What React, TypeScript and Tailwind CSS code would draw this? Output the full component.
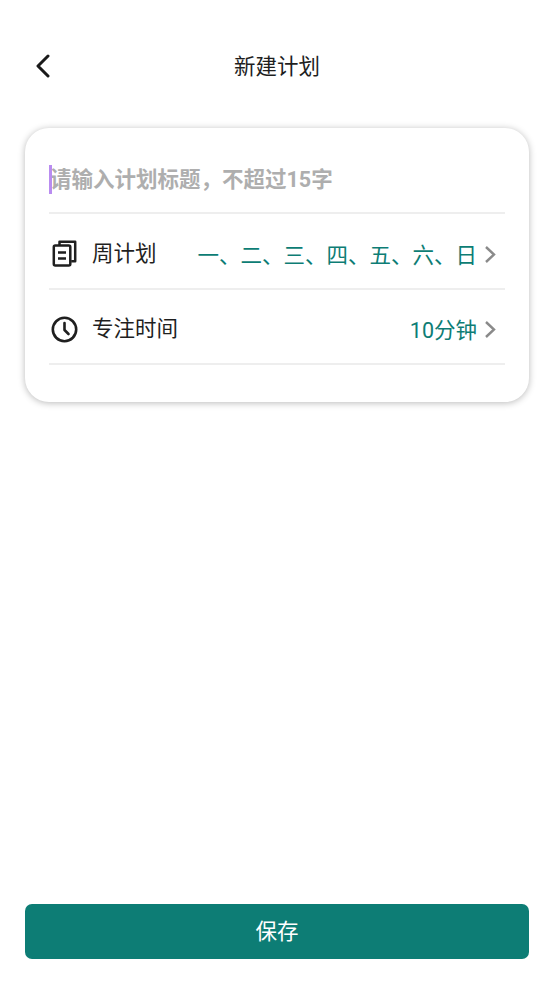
const FONT = "font-['Roboto','Noto_Sans_CJK_SC',sans-serif]"

function CopyIcon() {
  return (
    <svg className="-mt-[1px]" width="25" height="27" viewBox="0 0 25 27" fill="none" stroke="#1f1f1f" strokeWidth="2.500">
      <path d="M7.500 5V1.800h15.700v19.400h-4" strokeLinejoin="round" />
      <rect x="1.800" y="5.500" width="16.500" height="20" rx="1.500" />
      <path d="M6 12.500h8M6 18.500h8" strokeWidth="2.300" />
    </svg>
  )
}

function ClockIcon() {
  return (
    <svg width="27" height="27" viewBox="0 0 27 27" fill="none" stroke="#1f1f1f" strokeWidth="2.600">
      <circle cx="13.500" cy="13.500" r="11.700" />
      <path d="M13.500 7v7l4 4" strokeLinecap="round" strokeLinejoin="round" />
    </svg>
  )
}

function Chevron() {
  return (
    <svg className="ml-[7px] mr-[9px] shrink-0" width="12" height="19" viewBox="0 0 12 19" fill="none" stroke="#8a8a8a" strokeWidth="2.400">
      <path d="M2 2l8 7.500-8 7.500" />
    </svg>
  )
}

function Row({ icon, label, value, rowClass }: { icon: React.ReactNode; label: string; value: string; rowClass: string }) {
  return (
    <div className={`flex items-center border-b-2 border-[#eeeeee] pt-[6px] ${rowClass}`}>
      <span className="ml-[2px] flex w-[27px] shrink-0 justify-center">{icon}</span>
      <span className="ml-[14px] -mt-[1px] text-[21.500px] leading-none text-[#1f1f1f]">{label}</span>
      <span className="ml-auto mt-[3px] text-[21.500px] leading-none text-[#0d7d75]">{value}</span>
      <Chevron />
    </div>
  )
}

export default function App() {
  return (
    <div className={`flex h-[984px] w-[554px] flex-col overflow-hidden bg-white ${FONT}`}>
      <header className="relative flex h-[128px] shrink-0 items-start justify-center pt-[54px]">
        <svg className="absolute left-[35px] top-[54px]" width="15" height="24" viewBox="0 0 15 24" fill="none" stroke="#1a1a1a" strokeWidth="3" strokeLinecap="round" strokeLinejoin="round">
          <path d="M13 2L3 12l10 10" />
        </svg>
        <h1 className="text-[21.500px] leading-[26px] font-normal text-[#1f1f1f]">新建计划</h1>
      </header>

      <section className="mx-[25px] h-[274px] rounded-[24px] bg-white px-[24px] shadow-[0_1px_7px_rgba(0,0,0,0.28)]">
        <div className="relative flex h-[86px] items-center border-b-2 border-[#eeeeee]">
          <span className="absolute left-0 top-[37px] h-[29px] w-[3px] bg-[#b98cf0]" />
          <span className="ml-[1px] mt-[20px] text-[21.500px] leading-none font-bold text-[#aeaeae]">请输入计划标题，不超过15字</span>
        </div>
        <Row icon={<CopyIcon />} label="周计划" value="一、二、三、四、五、六、日" rowClass="h-[76px]" />
        <Row icon={<ClockIcon />} label="专注时间" value="10分钟" rowClass="h-[75px]" />
      </section>

      <div className="flex-1" />

      <button className="mx-[25px] mb-[25px] flex h-[55px] items-center justify-center rounded-[7px] bg-[#0d7d75] text-[21.500px] leading-none text-white">
        保存
      </button>
    </div>
  )
}
